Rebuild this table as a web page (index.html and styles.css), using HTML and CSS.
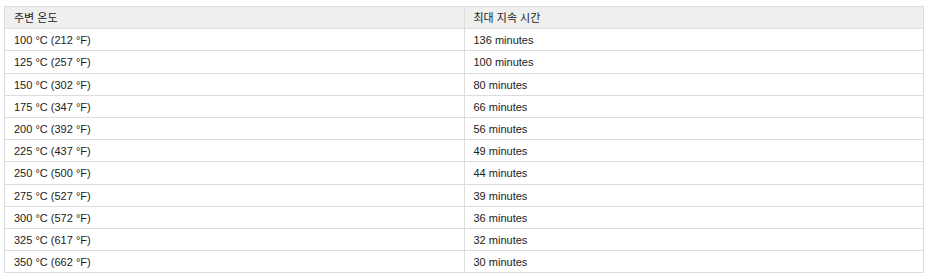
FILE: index.html
```html
<!DOCTYPE html>
<html lang="ko">
<head>
<meta charset="utf-8">
<link rel="stylesheet" href="styles.css">
</head>
<body>
<table class="temps">
  <thead>
    <tr><th>주변 온도</th><th>최대 지속 시간</th></tr>
  </thead>
  <tbody>
    <tr><td>100 °C (212 °F)</td><td>136 minutes</td></tr>
    <tr><td>125 °C (257 °F)</td><td>100 minutes</td></tr>
    <tr><td>150 °C (302 °F)</td><td>80 minutes</td></tr>
    <tr><td>175 °C (347 °F)</td><td>66 minutes</td></tr>
    <tr><td>200 °C (392 °F)</td><td>56 minutes</td></tr>
    <tr><td>225 °C (437 °F)</td><td>49 minutes</td></tr>
    <tr><td>250 °C (500 °F)</td><td>44 minutes</td></tr>
    <tr><td>275 °C (527 °F)</td><td>39 minutes</td></tr>
    <tr><td>300 °C (572 °F)</td><td>36 minutes</td></tr>
    <tr><td>325 °C (617 °F)</td><td>32 minutes</td></tr>
    <tr><td>350 °C (662 °F)</td><td>30 minutes</td></tr>
  </tbody>
</table>
</body>
</html>
```
FILE: styles.css
```css
html, body {
  background: #ffffff;
}
body {
  margin: 6px 5px 0 4px;
  font-family: "Liberation Sans", Arial, "Noto Sans CJK KR", sans-serif;
  font-size: 11px;
  color: #222222;
}
.temps {
  width: 100%;
  border-collapse: collapse;
  table-layout: fixed;
}
.temps th,
.temps td {
  width: 50%;
  border: 1px solid #dddddd;
  padding: 5px 9px 3px;
  line-height: 13.2px;
  text-align: left;
  font-weight: normal;
}
.temps th {
  background: #efefef;
  color: #222222;
}
```
